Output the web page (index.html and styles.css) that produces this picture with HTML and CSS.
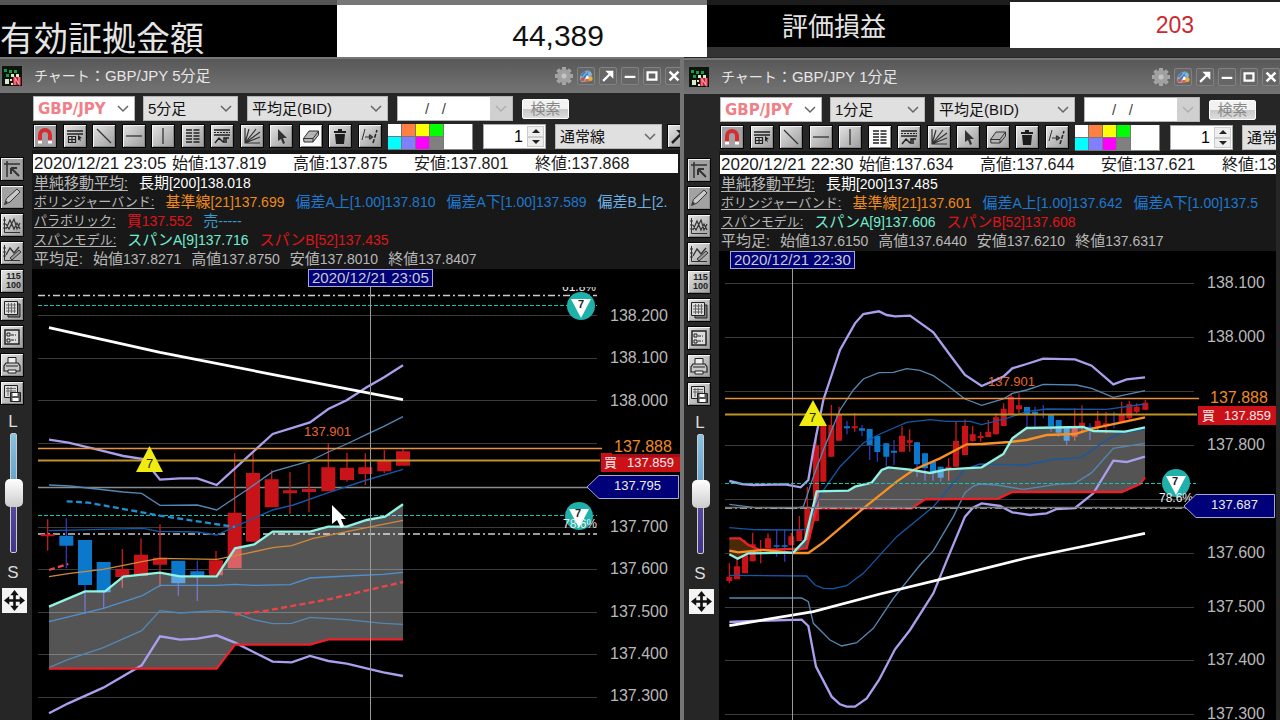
FILE: index.html
```html
<!DOCTYPE html>
<html lang="ja">
<head>
<meta charset="utf-8">
<title>チャート GBP/JPY</title>
<link rel="stylesheet" href="styles.css">
</head>
<body>
<svg class="defs" aria-hidden="true">
  <defs>
    <symbol id="app" viewBox="0 0 20 20"><rect width="20" height="20" fill="#0d1510"/><path d="M2 3h3v3H2zM7 4h3v3H7zM12 4h3v3h-3zM4 8h3v3H4z" fill="#1f9a3c"/><path d="M9 8h3v3H9zM14 8h3v3h-3zM3 13h4v5H3zM8 13h2v2H8zM9 17h2v2H9z" fill="#dfe8c8"/><path d="M11 11h8v8h-8z" fill="#c22034"/><path d="M13 19v-7l4 6v-7" fill="none" stroke="#f7a0a8" stroke-width="1.2"/></symbol>
    <symbol id="gear" viewBox="0 0 18 18"><path d="M9 0v18M0 9h18M2.600 2.600l12.800 12.800M15.400 2.600L2.600 15.400" stroke="#a5a5a5" stroke-width="4"/><circle cx="9" cy="9" r="7" fill="#a0a0a0"/><circle cx="9" cy="9" r="2.500" fill="#c4c4c4"/></symbol>
    <symbol id="paint" viewBox="0 0 18 18"><path d="M2 13C2 6 7 2 13 3l3 4-3 8-9 1z" fill="#8ea7bf"/><path d="M4 9l4-5M6 12l7-8" stroke="#3f79c4" stroke-width="2"/><path d="M8 13l2-5 4 4z" fill="#fff"/><circle cx="5" cy="13" r="2" fill="#d64d3a"/><circle cx="14" cy="12" r="2.500" fill="#edb030"/><circle cx="10" cy="14" r="2" fill="#e0604a"/><circle cx="13" cy="6" r="2" fill="#78b8e8"/></symbol>
    <symbol id="pop" viewBox="0 0 18 18"><path d="M3.500 14.500L11 7" stroke="#fff" stroke-width="2.500"/><path d="M6 3h9v9z" fill="#fff"/></symbol>
    <symbol id="min" viewBox="0 0 18 18"><path d="M3 10h12" stroke="#fff" stroke-width="2.500"/></symbol>
    <symbol id="max" viewBox="0 0 18 18"><path d="M4 5h10v8H4z" fill="none" stroke="#fff" stroke-width="2.500"/></symbol>
    <symbol id="close" viewBox="0 0 18 18"><path d="M4 4l10 10M14 4L4 14" stroke="#fff" stroke-width="2.800"/></symbol>

    <symbol id="magnet" viewBox="0 0 20 20"><path d="M5 17V9a5 5 0 0 1 10 0v8" fill="none" stroke="#d82c34" stroke-width="4"/><path d="M3 16h4M13 16h4" stroke="#fff" stroke-width="3"/></symbol>
    <symbol id="pane" viewBox="0 0 20 20"><path d="M2 5h16M2 8h16" stroke="#222" stroke-width="1.500"/><path d="M3.500 10.500h7v6h-7zM3.500 13.500h7M7 10.500v6" fill="none" stroke="#222" stroke-width="1.200"/><path d="M13 9l4 3-2 .5 1 3-2-2-1 1z" fill="#222"/></symbol>
    <symbol id="diag" viewBox="0 0 20 20"><path d="M3 3l14 14" stroke="#333" stroke-width="1.300"/></symbol>
    <symbol id="horz" viewBox="0 0 20 20"><path d="M2 10h16" stroke="#333" stroke-width="1.300"/></symbol>
    <symbol id="vert" viewBox="0 0 20 20"><path d="M10 2v16" stroke="#333" stroke-width="1.300"/></symbol>
    <symbol id="list" viewBox="0 0 20 20"><path d="M3 4h14M3 7h14M3 10h14M3 13h14M3 16h14" stroke="#222" stroke-width="1.500" stroke-dasharray="6 1.500"/></symbol>
    <symbol id="swing" viewBox="0 0 20 20"><path d="M2 4h16M2 9h16" stroke="#222" stroke-width="1.300"/><path d="M2 6.500h16" stroke="#222" stroke-dasharray="2 1"/><path d="M3 17l4-5 4 4M12 17v-5h5M14 17v-5" fill="none" stroke="#222" stroke-width="1.500"/></symbol>
    <symbol id="fan" viewBox="0 0 20 20"><path d="M3 2v15h15M3 17L7 3M3 17L14 3M3 17L18 6M3 17l15-6" fill="none" stroke="#333" stroke-width="1.200"/></symbol>
    <symbol id="arrow" viewBox="0 0 20 20"><path d="M7 3v12l3-2 2 5 2-1-2-5h4z" fill="#333"/></symbol>
    <symbol id="eraser" viewBox="0 0 20 20"><path d="M2.500 12.500L8 5h9.500v4L12 16H3z" fill="#b5b5b5" stroke="#333"/><path d="M2.500 12.500H12L17.500 5M12 12.500V16" fill="none" stroke="#333"/></symbol>
    <symbol id="trash" viewBox="0 0 20 20"><path d="M4 5h12v2H4zM8 3h4v2H8zM5 8h10l-1 10H6z" fill="#1c1c1c"/></symbol>
    <symbol id="shift" viewBox="0 0 20 20"><path d="M2 14L5 3" stroke="#333"/><path d="M13 17l4-13" stroke="#222" stroke-width="1.500" stroke-dasharray="4 1.500"/><path d="M5 11h7M9.500 8.500v5M10 9l2.500 2-2.500 2" fill="none" stroke="#333" stroke-width="1.200"/></symbol>
    <symbol id="ne" viewBox="0 0 20 20"><path d="M3 17L12 8" stroke="#222" stroke-width="2.500"/><path d="M7 4h9v9z" fill="#222"/></symbol>

    <symbol id="corner" viewBox="0 0 20 20"><path d="M2 5h16M5 2v16" stroke="#333" stroke-width="1.500"/><path d="M9 9h6M9 9v6M9 9l8 8" fill="none" stroke="#333" stroke-width="2"/></symbol>
    <symbol id="pencil" viewBox="0 0 20 20"><path d="M2.500 17.500l2-6L15 2l3 3-10 10z" fill="#c8c8c8" stroke="#333"/><path d="M3 17l3-2-2-1z" fill="#222"/></symbol>
    <symbol id="wave" viewBox="0 0 20 20"><path d="M2.500 2v15.500H18M1 5h3M1 9h3M1 13h3" fill="none" stroke="#333"/><path d="M4 14l4-9 4 9 3-6 3 6M4 9l3 5 5-10 3 10 3-6" fill="none" stroke="#333" stroke-width="1.200"/></symbol>
    <symbol id="edit" viewBox="0 0 20 20"><path d="M2.500 2v15.500H18M1 5h3M1 9h3M1 13h3" fill="none" stroke="#333"/><path d="M4 12l4-7 4 5 5-6" fill="none" stroke="#333" stroke-width="1.300"/><path d="M8 15l9-8 2 2-9 8z" fill="#999" stroke="#333"/></symbol>
    <symbol id="doc" viewBox="0 0 20 20"><path d="M6 5h12v13H6z" fill="#777" stroke="#222"/><path d="M2.500 2.500h13v13h-13z" fill="#ddd" stroke="#222"/><path d="M4 6h10M4 9h10M4 12h10M6.500 4v10M9.500 4v10M12.500 4v10" stroke="#666"/></symbol>
    <symbol id="prefs" viewBox="0 0 20 20"><path d="M3 3h14v14H3z" fill="#ddd" stroke="#222" stroke-width="1.500"/><path d="M5 6h3v3H5zM5 12h3v3H5z" fill="none" stroke="#222"/><path d="M9 8h5M9 13h5" stroke="#222" stroke-dasharray="3 1"/></symbol>
    <symbol id="print" viewBox="0 0 20 20"><path d="M6 8V2.500h8V8" fill="#eee" stroke="#222"/><path d="M4 8h12l2 3v5H2v-5z" fill="#c8c8c8" stroke="#222" stroke-width="1.200"/><path d="M4 11h12M6 15h8v3H6z" fill="#eee" stroke="#222"/></symbol>
    <symbol id="saveas" viewBox="0 0 20 20"><path d="M2.500 2.500h13v12h-13z" fill="#ddd" stroke="#222"/><path d="M4 5.500h10M4 8h10M6 4v9M9 4v9" stroke="#666"/><path d="M8.500 9.500h10v9h-10z" fill="#555" stroke="#222"/><path d="M10.500 10h5v3h-5zM10.500 15h6v3h-6z" fill="#fff"/></symbol>
    <symbol id="move" viewBox="0 0 20 20"><path d="M10 3v14M3 10h14" stroke="#111" stroke-width="2.500"/><path d="M10 0l4 5H6zM10 20l4-5H6zM0 10l5-4v8zM20 10l-5-4v8z" fill="#111"/></symbol>
    <symbol id="mark" viewBox="0 0 28 28"><circle cx="14" cy="14" r="14" fill="#1fb0aa"/><path d="M4 7h20L14 26z" fill="#fff"/></symbol>
  </defs>
</svg>

<header class="summary">
  <div class="cell label big">有効証拠金額</div>
  <div class="cell value big-num">44,389</div>
  <div class="cell label mid">評価損益</div>
  <div class="cell value mid-num">203</div>
</header>

<main class="windows">
<section class="window">
  <div class="titlebar">
    <svg class="app-icon"><use href="#app"/></svg>
    <h2><span class="kana">チャート</span>：GBP/JPY 5分足</h2>
    <div class="win-buttons">
      <button aria-label="設定" class="plain"><svg><use href="#gear"/></svg></button><button aria-label="配色"><svg><use href="#paint"/></svg></button><button aria-label="切り離し"><svg><use href="#pop"/></svg></button><button aria-label="最小化"><svg><use href="#min"/></svg></button><button aria-label="最大化"><svg><use href="#max"/></svg></button><button aria-label="閉じる"><svg><use href="#close"/></svg></button>
    </div>
  </div>
  <div class="toolbar fields">
    <select class="combo pair" aria-label="通貨ペア"><option>GBP/JPY</option></select>
    <select class="combo term" aria-label="足種"><option>5分足</option></select>
    <select class="combo kind" aria-label="価格"><option>平均足(BID)</option></select>
    <div class="date"><input aria-label="日付" value="/   /"><button aria-label="日付を選択"></button></div>
    <button class="search">検索</button>
  </div>
  <div class="toolbar tools">
    <div class="tool-set">
      <button class="tool on" aria-label="マグネット"><svg><use href="#magnet"/></svg></button><button class="tool" aria-label="パネル"><svg><use href="#pane"/></svg></button><button class="tool" aria-label="トレンドライン"><svg><use href="#diag"/></svg></button><button class="tool" aria-label="水平線"><svg><use href="#horz"/></svg></button><button class="tool" aria-label="垂直線"><svg><use href="#vert"/></svg></button><button class="tool" aria-label="リトレースメント"><svg><use href="#list"/></svg></button><button class="tool" aria-label="目標値"><svg><use href="#swing"/></svg></button><button class="tool" aria-label="ファン"><svg><use href="#fan"/></svg></button><button class="tool" aria-label="選択"><svg><use href="#arrow"/></svg></button><button class="tool lit" aria-label="消しゴム"><svg><use href="#eraser"/></svg></button><button class="tool" aria-label="全削除"><svg><use href="#trash"/></svg></button><button class="tool" aria-label="平行移動"><svg><use href="#shift"/></svg></button>
    </div>
    <div class="palette">
      <button class="c-white" aria-label="白"></button><button class="c-orange" aria-label="橙"></button><button class="c-yellow" aria-label="黄"></button><button class="c-green" aria-label="緑"></button>
      <button class="c-cyan" aria-label="水色"></button><button class="c-violet" aria-label="紫"></button><button class="c-pink" aria-label="桃"></button><button class="c-gray" aria-label="灰"></button>
      <span class="current"></span>
    </div>
    <div class="spin"><input aria-label="線の太さ" value="1"><span><button class="up" aria-label="増やす"></button><button class="down" aria-label="減らす"></button></span></div>
    <select class="combo line" aria-label="線種"><option>通常線</option></select>
    <button class="tool" aria-label="その他"><svg><use href="#ne"/></svg></button>
  </div>
  <div class="workspace">
    <aside class="side">
      <button class="tool on" aria-label="十字"><svg><use href="#corner"/></svg></button>
      <button class="tool on" aria-label="描画"><svg><use href="#pencil"/></svg></button>
      <button class="tool" aria-label="テクニカル"><svg><use href="#wave"/></svg></button>
      <button class="tool" aria-label="テクニカル設定"><svg><use href="#edit"/></svg></button>
      <button class="tool scale" aria-label="目盛"><span>115</span><span>100</span></button>
      <button class="tool" aria-label="データ"><svg><use href="#doc"/></svg></button>
      <button class="tool" aria-label="設定"><svg><use href="#prefs"/></svg></button>
      <button class="tool" aria-label="印刷"><svg><use href="#print"/></svg></button>
      <button class="tool" aria-label="保存"><svg><use href="#saveas"/></svg></button>
      <label class="ls" for="zoom1">L</label>
      <input id="zoom1" class="zoom" type="range" value="50">
      <span class="ls">S</span>
      <button class="pan" aria-label="移動"><svg><use href="#move"/></svg></button>
    </aside>
    <div class="content">
      <div class="ohlc"><span class="when">2020/12/21 23:05</span><span>始値:137.819</span><span>高値:137.875</span><span>安値:137.801</span><span>終値:137.868</span></div>
      <div class="studies">
        <p><u><b>単純移動平均</b>:</u> <span class="white"><b>長期</b>[200]138.018</span></p>
        <p><u class="kana">ボリンジャーバンド:</u> <span class="orange"><b>基準線</b>[21]137.699</span> <span class="blue"><b>偏差</b>A<b>上</b>[1.00]137.810</span> <span class="blue"><b>偏差</b>A<b>下</b>[1.00]137.589</span> <span class="sky"><b>偏差</b>B<b>上</b>[2.</span></p>
        <p><u class="kana">パラボリック:</u> <span class="red"><b>買</b>137.552</span> <span class="azure"><b>売</b>-----</span></p>
        <p><u class="kana">スパンモデル:</u> <span class="mint"><b>スパン</b>A[9]137.716</span> <span class="red"><b>スパン</b>B[52]137.435</span></p>
        <p class="avg"><span><b>平均足</b>:</span> <span><b>始値</b>137.8271</span> <span><b>高値</b>137.8750</span> <span><b>安値</b>137.8010</span> <span><b>終値</b>137.8407</span></p>
      </div>
      <svg class="chart" viewBox="32 269 648 451" role="img" aria-label="GBP/JPY 5分足チャート">
        <path class="grid" d="M38 315.500H597M38 358.500H597M38 400.500H597M38 443.500H597M38 527.500H597M38 569.500H597M38 612.500H597M38 654.500H597M38 697.500H597"/>
        <path class="dashdot" d="M38 295.500H597M38 534H597"/>
        <path class="teal" d="M38 305.500H597M38 515.500H597"/>
        <path class="level" d="M38 487.500H590"/>
        <g transform="translate(0 290) scale(.33333)">
          <path class="wick-r" d="M143 688V782M367 777V893M423 745V800M480 703V890M648 783V815M704 490V670M759 490V550M815 541V570M870 546V672M927 522V667M985 459V540M1041 488V575M1096 490V585M1153 480V550M1209 475V490"/>
          <path class="wick-b" d="M199 685V835M255 880V972M311 900V955M535 870V917M592 812V933"/>
          <path class="body-r w5" d="M143 733V739M367 837V861M423 794V858M480 803V824M648 811V856M704 668V835M759 549V755M815 568V652M870 601V610M927 597V606M985 532V604M1041 533V570M1096 532V552M1153 510V544M1209 484V527"/>
          <path class="body-b w5" d="M199 737V767M255 750V885M311 816V907M535 812V880M592 844V858"/>
          <path class="cloud" d="M147 950L255 904 315 904 370 860 480 848 540 859 650 859 705 775 763 763 818 725 930 725 985 710 1040 710 1100 690 1155 680 1209 643V1048H985L930 1064H705L650 1136H147z"/>
          <path class="b1" d="M147 722L430 715 475 724 592 726 650 735 705 710 818 660 880 645 985 608 1100 570 1209 538"/>
          <path class="b1 lt" d="M147 995L310 955 425 918 480 886 650 886 705 883 760 886 870 884 930 864 1040 858 1150 853 1209 847"/>
          <path class="b2" d="M147 585L210 588 370 606 425 610 480 646 592 645 650 660 740 600 818 545 930 513 985 486 1040 462 1100 433 1150 410 1209 380M147 1133L205 1108 310 1073 425 1022 480 962 540 969 650 962 705 969 760 989 818 1001 875 1000 930 982 1040 989 1150 1000 1209 1003"/>
          <path class="b3" d="M147 449L205 458 290 478 370 498 430 507 480 569 540 565 592 565 650 585 705 535 760 485 818 432 930 397 985 357 1040 331 1100 292 1150 263 1209 226M147 1270L205 1240 310 1193 425 1126 480 1039 540 1049 592 1046 650 1036 705 1058 818 1115 875 1117 930 1098 985 1113 1040 1121 1150 1147 1209 1158"/>
          <path class="mid thin" d="M147 860L210 850 310 838 430 814 480 805 650 808 740 790 818 773 875 767 940 745 1000 733 1100 713 1209 691"/>
          <path class="sar-b" d="M200 634L265 638 480 677 705 711"/>
          <path class="sar-r" d="M147 840L205 822M705 974L800 962 985 928 1209 876"/>
          <path class="span-a" d="M147 950L255 904 315 904 370 860 480 848 540 859 650 859 705 775 763 763 818 725 930 725 985 710 1040 710 1100 690 1155 680 1209 643"/>
          <path class="span-b" d="M147 1136H650L705 1064H930L985 1048H1209"/>
          <path class="ma" d="M147 113L480 187 800 250 1209 329"/>
        </g>
        <path class="hi" d="M38 448.500H602"/><path class="yl" d="M38 460.500H600"/>
        <path class="cross" d="M370.500 287V720"/>
        <path fill="#f0ec10" d="M149.500 446L136 472H163z"/><text class="seven" x="146" y="468">7</text>
        <text class="peak" x="304" y="436">137.901</text>
        <svg x="560" y="287" width="40" height="20" viewBox="560 287 40 20"><text class="pct" x="562" y="291">61.8%</text></svg>
        <use href="#mark" x="567" y="292" width="28" height="28"/><text class="seven sm" x="578" y="308">7</text>
        <use href="#mark" x="565" y="502" width="28" height="28"/><text class="seven sm" x="575" y="517">7</text>
        <text class="pct" x="563" y="528">78.6%</text>
        <g class="axis"><text x="610" y="321">138.200</text><text x="610" y="363">138.100</text><text x="610" y="406">138.000</text><text x="610" y="532">137.700</text><text x="610" y="574">137.600</text><text x="610" y="617">137.500</text><text x="610" y="659">137.400</text><text x="610" y="701">137.300</text></g>
        <rect x="601" y="453" width="79" height="19" fill="#cc1018"/><text class="tag" x="604" y="467">買</text><text class="tag" x="627" y="467">137.859</text>
        <path fill="#000" d="M612 436H680V454H612z"/>
        <path fill="#a01018" d="M612 454H680V457H612z"/>
        <text class="hi-text" x="614" y="452">137.888</text>
        <path class="bluetag" d="M587 487L599 475.500H678.500V498.500H599z"/><text class="tag" x="614" y="490">137.795</text>
        <rect class="bluetag" x="308.500" y="269.500" width="124" height="17"/><text class="time" x="312" y="283">2020/12/21 23:05</text>
        <path d="M332 505V524L337 520L341 528L344 526L341 519H346z" fill="#fff"/>
      </svg>
    </div>
  </div>
</section>

<section class="window second">
  <div class="titlebar">
    <svg class="app-icon"><use href="#app"/></svg>
    <h2><span class="kana">チャート</span>：GBP/JPY 1分足</h2>
    <div class="win-buttons">
      <button aria-label="設定" class="plain"><svg><use href="#gear"/></svg></button><button aria-label="配色"><svg><use href="#paint"/></svg></button><button aria-label="切り離し"><svg><use href="#pop"/></svg></button><button aria-label="最小化"><svg><use href="#min"/></svg></button><button aria-label="最大化"><svg><use href="#max"/></svg></button><button aria-label="閉じる"><svg><use href="#close"/></svg></button>
    </div>
  </div>
  <div class="toolbar fields">
    <select class="combo pair" aria-label="通貨ペア"><option>GBP/JPY</option></select>
    <select class="combo term" aria-label="足種"><option>1分足</option></select>
    <select class="combo kind" aria-label="価格"><option>平均足(BID)</option></select>
    <div class="date"><input aria-label="日付" value="/   /"><button aria-label="日付を選択"></button></div>
    <button class="search">検索</button>
  </div>
  <div class="toolbar tools">
    <div class="tool-set">
      <button class="tool on" aria-label="マグネット"><svg><use href="#magnet"/></svg></button><button class="tool" aria-label="パネル"><svg><use href="#pane"/></svg></button><button class="tool" aria-label="トレンドライン"><svg><use href="#diag"/></svg></button><button class="tool" aria-label="水平線"><svg><use href="#horz"/></svg></button><button class="tool" aria-label="垂直線"><svg><use href="#vert"/></svg></button><button class="tool lit" aria-label="リトレースメント"><svg><use href="#list"/></svg></button><button class="tool" aria-label="目標値"><svg><use href="#swing"/></svg></button><button class="tool" aria-label="ファン"><svg><use href="#fan"/></svg></button><button class="tool" aria-label="選択"><svg><use href="#arrow"/></svg></button><button class="tool" aria-label="消しゴム"><svg><use href="#eraser"/></svg></button><button class="tool" aria-label="全削除"><svg><use href="#trash"/></svg></button><button class="tool" aria-label="平行移動"><svg><use href="#shift"/></svg></button>
    </div>
    <div class="palette">
      <button class="c-white" aria-label="白"></button><button class="c-orange" aria-label="橙"></button><button class="c-yellow" aria-label="黄"></button><button class="c-green" aria-label="緑"></button>
      <button class="c-cyan" aria-label="水色"></button><button class="c-violet" aria-label="紫"></button><button class="c-pink" aria-label="桃"></button><button class="c-gray" aria-label="灰"></button>
      <span class="current"></span>
    </div>
    <div class="spin"><input aria-label="線の太さ" value="1"><span><button class="up" aria-label="増やす"></button><button class="down" aria-label="減らす"></button></span></div>
    <select class="combo line" aria-label="線種"><option>通常線</option></select>
  </div>
  <div class="workspace">
    <aside class="side">
      <button class="tool on" aria-label="十字"><svg><use href="#corner"/></svg></button>
      <button class="tool on" aria-label="描画"><svg><use href="#pencil"/></svg></button>
      <button class="tool" aria-label="テクニカル"><svg><use href="#wave"/></svg></button>
      <button class="tool" aria-label="テクニカル設定"><svg><use href="#edit"/></svg></button>
      <button class="tool scale" aria-label="目盛"><span>115</span><span>100</span></button>
      <button class="tool" aria-label="データ"><svg><use href="#doc"/></svg></button>
      <button class="tool" aria-label="設定"><svg><use href="#prefs"/></svg></button>
      <button class="tool" aria-label="印刷"><svg><use href="#print"/></svg></button>
      <button class="tool" aria-label="保存"><svg><use href="#saveas"/></svg></button>
      <label class="ls" for="zoom2">L</label>
      <input id="zoom2" class="zoom" type="range" value="50">
      <span class="ls">S</span>
      <button class="pan" aria-label="移動"><svg><use href="#move"/></svg></button>
    </aside>
    <div class="content">
      <div class="ohlc"><span class="when">2020/12/21 22:30</span><span>始値:137.634</span><span>高値:137.644</span><span>安値:137.621</span><span>終値:13</span></div>
      <div class="studies">
        <p><u><b>単純移動平均</b>:</u> <span class="white"><b>長期</b>[200]137.485</span></p>
        <p><u class="kana">ボリンジャーバンド:</u> <span class="orange"><b>基準線</b>[21]137.601</span> <span class="blue"><b>偏差</b>A<b>上</b>[1.00]137.642</span> <span class="blue"><b>偏差</b>A<b>下</b>[1.00]137.5</span></p>
        <p><u class="kana">スパンモデル:</u> <span class="mint"><b>スパン</b>A[9]137.606</span> <span class="red"><b>スパン</b>B[52]137.608</span></p>
        <p class="avg"><span><b>平均足</b>:</span> <span><b>始値</b>137.6150</span> <span><b>高値</b>137.6440</span> <span><b>安値</b>137.6210</span> <span><b>終値</b>137.6317</span></p>
      </div>
      <svg class="chart" viewBox="719 251 557 469" role="img" aria-label="GBP/JPY 1分足チャート">
        <path class="grid" d="M725 283.500H1194M725 337.500H1194M725 391.500H1194M725 445.500H1194M725 499.500H1194M725 553.500H1194M725 607.500H1194M725 660.500H1194M725 714.500H1194"/>
        <g transform="translate(680 290) scale(.33333)">
          <path class="wick-r" d="M148 820V880M171 800V868M195 750V850M218 728V814M242 750V820M264 730V775M334 728V766M358 678V753M382 590V750M408 430V693M430 400V575M454 345V500M477 350V452M524 370V425M666 408V485M689 418V485M806 505V572M828 395V530M855 388V495M878 408V455M902 425V455M925 390V441M948 370V433M971 340V408M993 310V375M1017 310V375M1184 355V452M1206 346V430M1253 362V420M1278 365V430M1325 335V400M1348 333V390M1370 340V370M1396 330V360"/>
          <path class="wick-b" d="M290 720V800M314 720V815M501 393V433M546 405V438M569 417V510M592 438V515M619 460V530M642 450V525M711 457V560M735 490V572M759 515V572M782 530V575M1041 351V412M1065 350V410M1090 345V385M1113 373V425M1136 390V440M1160 415V465M1230 400V450M1302 365V415"/>
          <path class="body-r w1" d="M148 860V873M171 829V868M195 770V850M218 763V814M264 745V775M334 739V766M358 717V753M382 650V750M408 467V693M430 408V575M454 405V500M477 375V452M524 409V415M666 437V485M689 451V458M806 530V540M828 453V530M855 408V495M878 433V453M902 438V444M925 425V441M948 382V433M971 356V408M993 320V375M1017 346V358M1184 410V440M1206 398V408M1253 392V412M1278 400V408M1325 373V395M1348 343V385M1370 350V365M1396 338V359"/>
          <path class="body-b w1" d="M290 766V770M314 766V770M501 409V415M546 415V422M569 417V465M592 438V486M619 460V500M642 482V488M711 457V523M735 490V535M759 515V550M782 530V563M1041 351V375M1065 365V372M1113 373V408M1136 390V428M1160 415V452M1230 410V416"/>
          <path d="M148 745H180L205 765 240 780 205 788 173 806 148 793z" fill="#4a2a08"/>
          <path class="cloud" d="M340 788L375 750 410 604 505 602 525 590 575 578 605 540 625 532 690 539 750 549 800 538 905 532 970 492 997 445 1040 414 1210 411 1240 423 1335 425 1395 412V562L1380 582 1325 606H997L955 626 735 628 695 655H410L380 775z"/>
          <path class="b1" d="M148 713L220 719 340 720 380 718 420 615 480 530 550 459 600 432 680 397 750 389 800 394 870 394 905 404 980 385 1040 365 1100 357 1280 358 1395 342M148 856L380 858 405 885 430 895 460 896 500 887 550 850 650 740 760 650 855 538 900 522 1040 525 1120 508 1205 502 1280 450 1320 430 1395 417"/>
          <path class="b2" d="M148 643L220 652 340 656 370 650 400 560 430 480 480 360 520 300 550 267 597 248 640 247 680 236 720 241 760 257 800 285 855 327 905 346 970 327 997 310 1040 300 1090 283 1190 285 1235 295 1300 322 1395 302M148 924L365 924 385 935 400 1000 450 1050 485 1068 530 1058 580 1015 640 925 720 825 760 782 820 680 855 608 880 588 900 582 950 585 1030 598 1130 583 1185 580 1235 548 1300 475 1395 460"/>
          <path class="b3" d="M148 573L185 582 220 585 315 583 362 592 385 570 400 480 430 330 460 240 480 180 525 100 550 72 597 64 620 75 645 79 690 77 760 127 810 195 855 255 905 288 970 260 997 235 1040 222 1090 206 1185 208 1235 227 1300 283 1340 268 1395 262M148 996L220 993 365 989 385 1008 408 1130 455 1220 480 1243 500 1250 525 1250 560 1225 597 1170 645 1078 690 1020 760 910 805 800 855 680 880 652 905 640 960 648 997 667 1050 675 1100 670 1130 657 1185 654 1240 610 1300 512 1340 516 1395 500"/>
          <path class="ma" d="M148 1007L400 965 600 912 840 854 1040 804 1230 765 1395 730"/>
          <path class="span-b" d="M148 745H180L205 765 240 780 380 775 410 655 695 655 735 628 955 626 997 606H1325L1380 582 1395 562"/>
          <path class="mid" d="M148 782L175 787 250 780 340 789 385 789 430 757 550 655 650 575 700 540 780 505 860 463 905 462 990 456 1040 450 1100 435 1185 432 1240 415 1395 382"/>
          <path class="span-a" d="M148 793L173 806 205 790 340 788 375 750 410 604 505 602 525 590 575 578 605 540 625 532 690 539 750 549 800 538 905 532 970 492 997 445 1040 414 1210 411 1240 423 1335 425 1395 412"/>
        </g>
        <path class="dashdot" d="M725 508H1186"/><path class="level dim" d="M725 507.500H1186"/>
        <path class="teal" d="M725 483.500H1196"/>
        <path class="hi" d="M725 398.500H1199"/><path class="yl" d="M725 414.500H1197"/>
        <path class="cross" d="M792.500 269V720"/>
        <path fill="#f0ec10" d="M813 400L799 426H827z"/><text class="seven" x="809" y="422">7</text>
        <text class="peak" x="988" y="386">137.901</text>
        <use href="#mark" x="1162" y="469" width="28" height="28"/><text class="seven sm" x="1172" y="485">7</text>
        <text class="pct" x="1159" y="502">78.6%</text>
        <g class="axis"><text x="1207" y="288">138.100</text><text x="1207" y="342">138.000</text><text x="1207" y="450">137.800</text><text x="1207" y="558">137.600</text><text x="1207" y="612">137.500</text><text x="1207" y="665">137.400</text><text x="1207" y="719">137.300</text></g>
        <text class="hi-text" x="1210" y="403">137.888</text>
        <rect x="1198" y="406" width="78" height="19" fill="#cc1018"/><text class="tag" x="1202" y="420">買</text><text class="tag" x="1224" y="420">137.859</text>
        <path class="bluetag" d="M1184 506L1196 494.500H1274.500V517.500H1196z"/><text class="tag" x="1211" y="509">137.687</text>
        <rect class="bluetag" x="730.500" y="251.500" width="124" height="17"/><text class="time" x="734" y="265">2020/12/21 22:30</text>
      </svg>
    </div>
  </div>
</section>
</main>
</body>
</html>
```
FILE: styles.css
```css
* { box-sizing: border-box; }
body {
  margin: 0;
  background: #202020;
  color: #ddd;
  font-family: "Liberation Sans", "Noto Sans CJK JP", sans-serif;
  overflow-x: hidden;
}
button { padding: 0; border: 0; font: inherit; }
.defs { display: none; }

/* account summary */
.summary {
  display: grid;
  grid-template-columns: 337fr 370fr 303fr 270fr;
  height: 57px;
}
.cell { display: flex; align-items: center; overflow: hidden; white-space: nowrap; }
.label { background: #000; color: #e4e4e4; }
.label.big { font-size: 34px; padding-top: 15px; line-height: 36px; border-top: 5px solid #555; }
.label.mid { font-size: 26px; padding: 0 0 3px 75px; border-top: 5px solid #1c1c1c; border-bottom: 10px solid #333; }
.value { background: #fff; justify-content: flex-end; }
.big-num { color: #111; font-size: 30px; padding: 10px 103px 0 0; border-top: 5px solid #777; }
.mid-num { color: #cc2a30; font-size: 23px; padding-right: 86px; border-top: 2px solid #222; border-bottom: 9px solid #333; }

/* chart windows */
.windows { display: grid; grid-template-columns: 17fr 15fr; }
.window { --inset: 0px; min-width: 0; overflow: hidden; background: #262626; }
.second { --inset: 3px; border-left: 4px solid #757575; padding-top: 1px; }
.titlebar {
  display: flex;
  align-items: center;
  height: 36px;
  padding-left: calc(2px + var(--inset));
  border-top: 2px solid #777;
  background: linear-gradient(#585858, #747474);
}
.app-icon { width: 20px; height: 20px; flex: none; }
h2 { margin: 0 0 0 12px; flex: 1; font-size: 15px; font-weight: 400; line-height: 20px; color: #e6e6e6; white-space: nowrap; }
.kana { font-size: 13px; }
h2 .kana { font-size: 14px; }
.win-buttons { display: flex; gap: 4px; margin-right: -3px; }
.second .win-buttons { margin-right: 0; }
.win-buttons button { width: 18px; height: 18px; background: #666; border: 1px solid #828282; border-radius: 2px; }
.win-buttons svg { display: block; width: 16px; height: 16px; }
.win-buttons .plain { border: 0; background: none; }
.win-buttons .plain svg { width: 18px; height: 18px; }

.toolbar { display: flex; padding-left: calc(33px + var(--inset)); overflow: hidden; }
.toolbar > * { flex: none; }
.second .toolbar { margin-right: 4px; }
.fields { gap: 9px; padding-top: 3px; height: 28px; }
.tools { height: 29px; padding-top: 3px; }
.combo {
  appearance: none;
  height: 25px;
  padding: 0 0 0 4px;
  border: 1px solid #b5b5b5;
  border-radius: 0;
  background: #e0e0e0 url("data:image/svg+xml,%3Csvg xmlns='http://www.w3.org/2000/svg' width='12' height='8'%3E%3Cpath d='M1 1l5 5 5-5' fill='none' stroke='%23666' stroke-width='1.500'/%3E%3C/svg%3E") no-repeat right 5px center;
  font: 15px "Liberation Sans", "Noto Sans CJK JP", sans-serif;
  color: #111;
}
.pair { width: 102px; margin-right: -1px; background-color: #fff; font: bold 15px "DejaVu Sans", sans-serif; color: #f08088; }
.term { width: 95px; }
.kind { width: 141px; }
.line { width: 107px; margin: 0 5px 0 9px; }
.date { display: flex; width: 116px; height: 25px; border: 1px solid #b5b5b5; }
.date input { flex: 1; width: 0; border: 0; padding: 0 0 0 27px; font-size: 15px; font-family: inherit; color: #444; background: #fff; }
.date button { width: 22px; background: #d0d0d0 url("data:image/svg+xml,%3Csvg xmlns='http://www.w3.org/2000/svg' width='12' height='8'%3E%3Cpath d='M1 1l5 5 5-5' fill='none' stroke='%23b0b0b0' stroke-width='1.500'/%3E%3C/svg%3E") no-repeat center; }
.search { align-self: center; width: 47px; height: 20px; border: 1px solid #fff; border-radius: 2px; background: linear-gradient(#f2f2f2 50%, #c8c8c8 50%, #ddd); color: #888; font-size: 15px; line-height: 18px; }

.tool-set { display: flex; justify-content: space-between; width: 349px; margin-right: 6px; }
.tool { width: 24px; height: 24px; border: 1px solid #050505; background: linear-gradient(135deg, #e4e4e4, #9c9c9c); box-shadow: inset 1px 1px #f4f4f4, inset -1px -1px #8a8a8a; }
.tool.on { background: #a2a2a2; }
.tool.lit { background: #fafafa; }
.tool svg { display: block; width: 20px; height: 20px; margin: 1px; }
.scale { display: flex; flex-direction: column; justify-content: center; padding-left: 3px; font: bold 9px "Liberation Sans", sans-serif; line-height: 9px; color: #222; }
.palette { display: grid; grid-template-columns: repeat(4, 14px) 28px; grid-template-rows: 13px 13px; border-right: 1px solid #888; }
.palette button { border: 1px solid #777; border-width: 0 1px 1px 0; }
.palette .current { grid-column: 5; grid-row: 1 / 3; background: #fff; border-bottom: 1px solid #888; }
.c-white { background: #fff; } .c-orange { background: #ff8040; } .c-yellow { background: #ff0; } .c-green { background: #0f0; }
.c-cyan { background: #0ff; } .c-violet { background: #8080ff; } .c-pink { background: #f0f; } .c-gray { background: #808080; }
.spin { display: flex; width: 63px; height: 25px; margin-left: 10px; padding: 1px; background: #fff; border: 1px solid #aaa; }
.spin input { flex: 1; width: 0; border: 0; padding: 0 4px 0 0; text-align: right; font-size: 16px; font-family: inherit; }
.spin span { display: grid; grid-template-rows: 1fr 1fr; width: 17px; }
.spin button { border: 1px solid #ccc; background: #eee; display: grid; place-items: center; }
.spin button::before { content: ""; border: 4px solid transparent; }
.spin .up::before { border-top: 0; border-bottom-color: #222; }
.spin .down::before { border-bottom: 0; border-top-color: #222; }

.workspace { display: grid; grid-template-columns: calc(32px + var(--inset)) minmax(0, 1fr); }
.second .workspace { padding-right: 4px; }
.side { display: flex; flex-direction: column; gap: 4px; padding: 7px 0 0 var(--inset); }
.ls { width: 26px; height: 24px; font-size: 17px; line-height: 26px; text-align: center; color: #ddd; }
.zoom { appearance: none; writing-mode: vertical-lr; width: 18px; height: 120px; margin: -4px 0 3px 4px; background: none; }
.zoom::-webkit-slider-runnable-track { width: 7px; height: 120px; border: 1px solid #ccc; border-radius: 2px; background: linear-gradient(#86c4e4, #5c9cc8 50%, #5a50a0 50%, #40358c); }
.zoom::-webkit-slider-thumb { appearance: none; width: 18px; height: 28px; margin-left: -6px; border-radius: 5px; background: linear-gradient(#fff, #ccc); }
.pan { width: 25px; height: 25px; margin-left: 2px; background: #f4f4f4; }
.pan svg { display: block; width: 21px; height: 21px; margin: 2px; }

.content { min-width: 0; padding-top: 4px; background: #181818; }
.ohlc { display: flex; height: 19px; margin: 0 2px 0 1px; overflow: hidden; background: #fff; color: #1a1a1a; font-size: 16px; line-height: 19px; white-space: nowrap; }
.second .ohlc { margin-right: 0; }
.ohlc span { flex: none; width: 121px; }
.ohlc .when { width: 139px; padding-left: 1px; font-size: 17px; }
.studies { padding: 0 0 1px 2px; font-size: 14px; color: #b8b8b8; }
.studies p { display: flex; gap: 11px; margin: 0; height: 19px; line-height: 19px; overflow: hidden; white-space: nowrap; }
.studies b { font-size: 15px; font-weight: 400; }
.studies u { text-underline-offset: 2px; }
.studies .avg { gap: 10px; }
.white { color: #fff; } .orange { color: #f08a1c; } .blue { color: #1e78d0; } .sky { color: #6cb0e4; }
.red { color: #e01418; } .azure { color: #3a98d0; } .mint { color: #72ecd0; }

/* plot */
.chart { display: block; width: 100%; background: #000; fill: none; }
.grid { stroke: #3c3c3c; }
.level { stroke: #8a8a8a; stroke-width: 1.5; } .level.dim { stroke: #777; }
.dashdot { stroke: #ccc; stroke-width: 1.5; stroke-dasharray: 7 3 2 3; }
.teal { stroke: #10c4b4; stroke-dasharray: 4 2; }
.hi { stroke: #e89040; stroke-width: 1.5; } .yl { stroke: #c09428; stroke-width: 2; }
.cross { stroke: #999; }
.wick-r { stroke: #c81818; stroke-width: 4; } .wick-b { stroke: #3434b4; stroke-width: 4; }
.body-r { stroke: #c81418; } .body-b { stroke: #0c78cc; }
.w5 { stroke-width: 42; } .w1 { stroke-width: 18; }
.cloud { fill: #fff; fill-opacity: .33; }
.b1 { stroke: #1458a8; stroke-width: 4; } .b1.lt { stroke: #5090d0; }
.b2 { stroke: #5488b4; stroke-width: 4; }
.b3 { stroke: #a8a0ec; stroke-width: 7; }
.mid { stroke: #f89024; stroke-width: 7; } .mid.thin { stroke: #d08a38; stroke-width: 4; }
.span-a { stroke: #90f4e4; stroke-width: 7; } .span-b { stroke: #ec2028; stroke-width: 7; }
.ma { stroke: #fff; stroke-width: 8; }
.sar-b { stroke: #2090d0; stroke-width: 7; stroke-dasharray: 18 10; }
.sar-r { stroke: #ec4448; stroke-width: 7; stroke-dasharray: 18 10; }
.axis { fill: #b8b8b8; font-size: 16px; }
.hi-text { fill: #f08a20; font-size: 16px; }
.tag { fill: #ececec; font-size: 13px; }
.time { fill: #ccc; font-size: 15px; }
.bluetag { fill: #000078; stroke: #a8a8d8; }
.peak { fill: #e8682c; font-size: 13px; }
.pct { fill: #eee; font-size: 12px; }
.seven { fill: #222; font-size: 13px; } .seven.sm { font-size: 11px; font-weight: 700; }
```
